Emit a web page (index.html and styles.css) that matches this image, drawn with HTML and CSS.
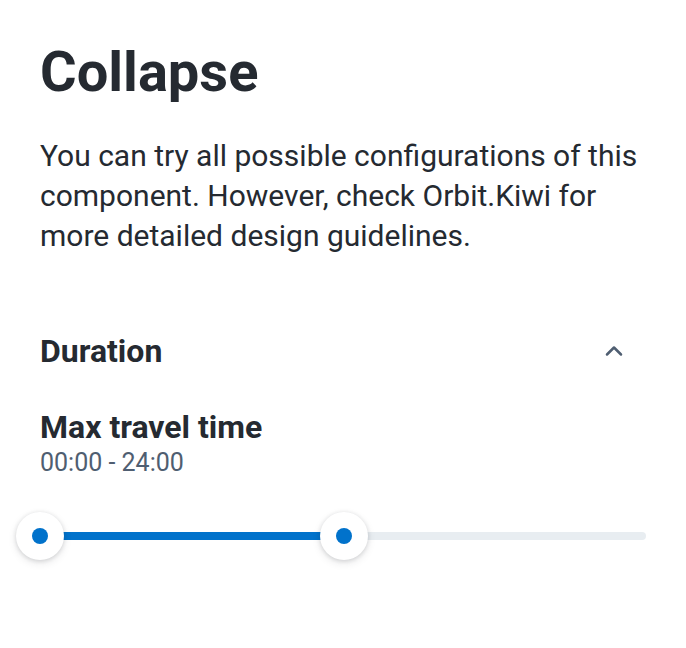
FILE: index.html
```html
<!DOCTYPE html>
<html>
<head>
<meta charset="utf-8">
<link rel="stylesheet" href="styles.css">
</head>
<body>
<main class="page">
  <h1 class="title">Collapse</h1>
  <p class="intro">You can try all possible configurations of this component. However, check Orbit.Kiwi for more detailed design guidelines.</p>
  <section class="collapse">
    <div class="collapse-header">
      <h2 class="collapse-title">Duration</h2>
      <svg class="chevron" width="24" height="24" viewBox="0 0 24 24"><path d="M5 15.5 L12 8.5 L19 15.5" fill="none" stroke="#4f5e71" stroke-width="2.5" stroke-linecap="round" stroke-linejoin="round"/></svg>
    </div>
    <div class="slider-label">
      <div class="slider-title">Max travel time</div>
      <div class="slider-value">00:00 - 24:00</div>
    </div>
    <div class="slider">
      <div class="track">
        <div class="track-fill" style="width: 50.2%"></div>
      </div>
      <div class="handle handle-start"><span class="dot"></span></div>
      <div class="handle handle-end" style="left: 50.2%"><span class="dot"></span></div>
    </div>
  </section>
</main>
</body>
</html>
```
FILE: styles.css
```css
html, body {
  margin: 0;
  padding: 0;
  background: #fff;
}
body {
  font-family: Roboto, "Liberation Sans", sans-serif;
  color: #252a31;
}
.page {
  padding: 40px 40px 60px 40px;
}
.title {
  margin: 0;
  font-size: 56px;
  font-weight: 700;
  line-height: 64px;
}
.intro {
  margin: 32px 0 0 0;
  font-size: 30px;
  line-height: 40px;
  font-weight: 400;
}
.collapse {
  margin-top: 75px;
}
.collapse-header {
  display: flex;
  align-items: center;
  justify-content: space-between;
  padding-right: 20px;
}
.collapse-title {
  margin: 0;
  font-size: 32px;
  font-weight: 700;
  line-height: 40px;
}
.chevron {
  display: block;
}
.slider-label {
  margin-top: 37px;
}
.slider-title {
  font-size: 32px;
  font-weight: 700;
  line-height: 39px;
}
.slider-value {
  font-size: 25px;
  line-height: 32px;
  color: #4f5e71;
}
.slider {
  position: relative;
  margin-top: 33px;
  height: 48px;
  display: flex;
  align-items: center;
}
.track {
  flex: 1;
  height: 8px;
  border-radius: 4px;
  background: #e8edf1;
  overflow: hidden;
}
.track-fill {
  height: 100%;
  background: #0172cb;
}
.handle {
  position: absolute;
  top: 0;
  left: 0;
  width: 48px;
  height: 48px;
  margin-left: -24px;
  border-radius: 50%;
  background: #fff;
  box-shadow: 0 1px 4px rgba(37, 42, 49, 0.16), 0 3px 8px rgba(37, 42, 49, 0.1);
  display: flex;
  align-items: center;
  justify-content: center;
}
.dot {
  width: 16px;
  height: 16px;
  border-radius: 50%;
  background: #0172cb;
}
```
